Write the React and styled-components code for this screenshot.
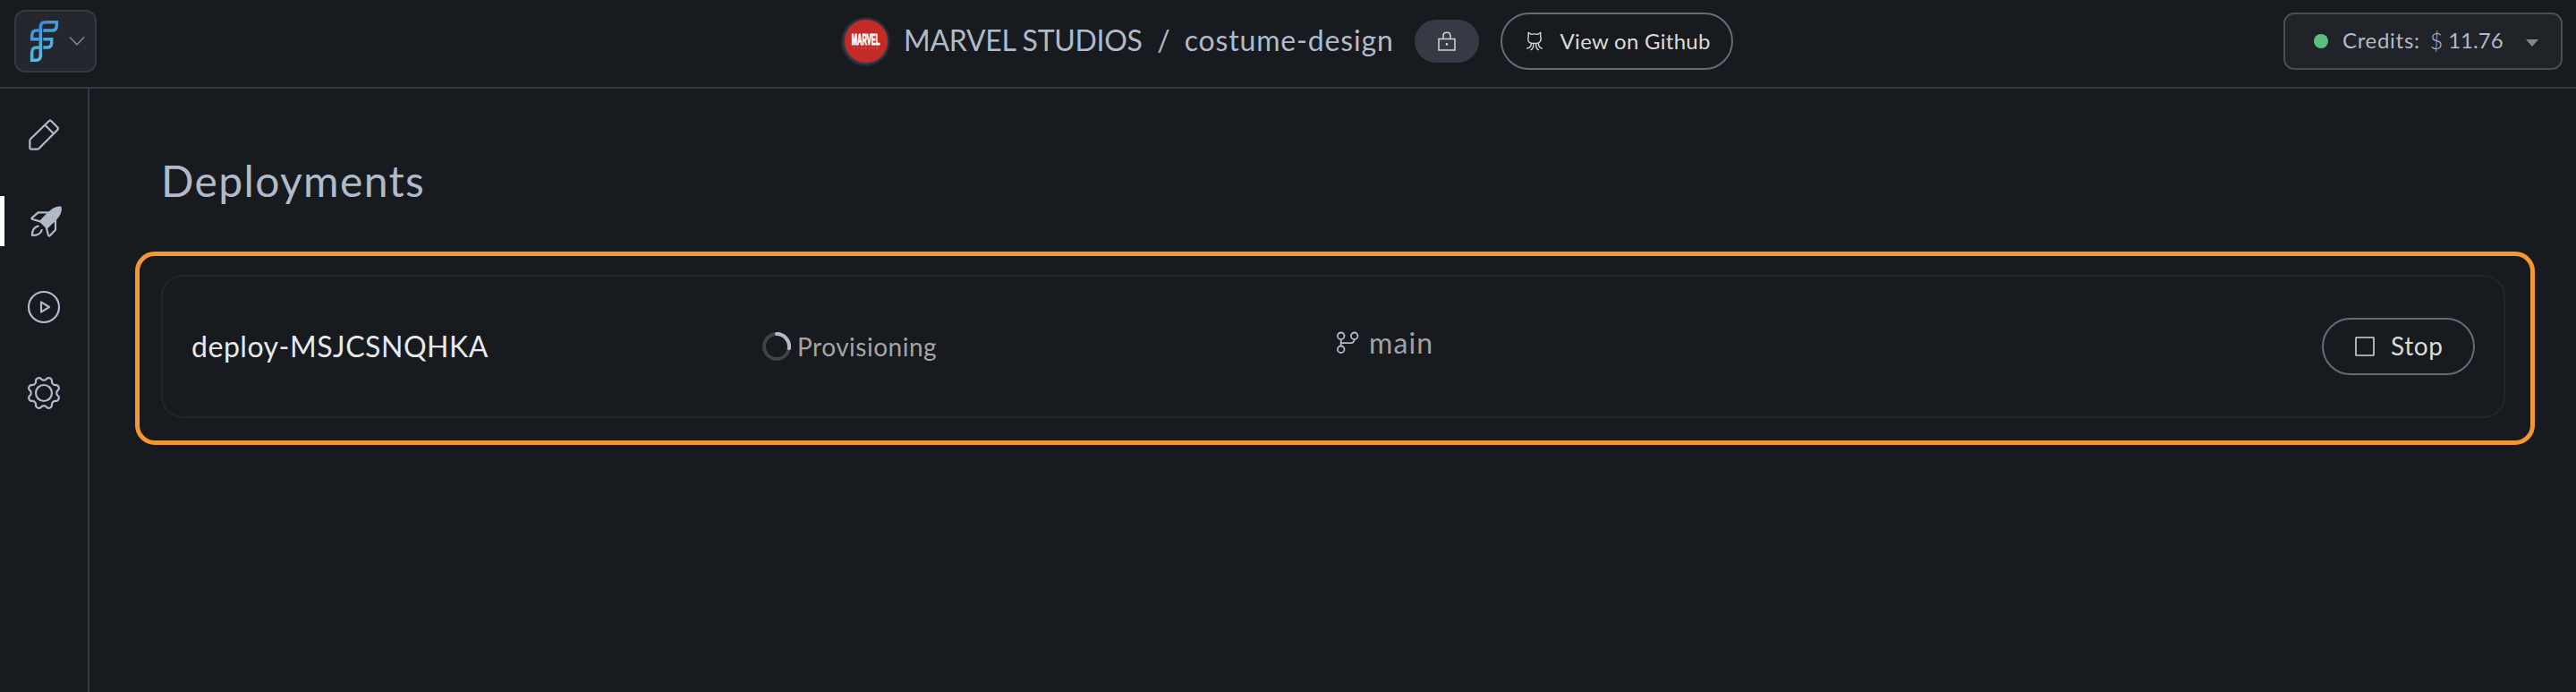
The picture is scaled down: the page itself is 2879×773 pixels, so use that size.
import React from 'react';
import styled, { createGlobalStyle } from 'styled-components';

const GlobalStyle = createGlobalStyle`
  *, *::before, *::after { box-sizing: border-box; }
  body {
    margin: 0;
    background: #171a1f;
    color: #b0bac9;
    font-family: Lato, "Open Sans", sans-serif;
  }
  svg { display: block; flex: none; }
  button { font: inherit; color: inherit; margin: 0; }
`;

const Page = styled.div`
  display: flex;
  flex-direction: column;
  height: 100vh;
  overflow: hidden;
`;

const Header = styled.header`
  display: flex;
  align-items: flex-start;
  height: 99px;
  padding: 11px 15px 0 16px;
  border-bottom: 2px solid #343b45;
`;

const LogoButton = styled.button`
  display: flex;
  align-items: center;
  gap: 10px;
  width: 92px;
  height: 70px;
  padding: 0 11px 0 15px;
  border: 2px solid #37393f;
  border-radius: 12px;
  background: #24272e;
`;

const Breadcrumb = styled.div`
  display: flex;
  align-items: center;
  height: 70px;
  margin-left: 832px;
`;

const Avatar = styled.div`
  display: flex;
  align-items: center;
  justify-content: center;
  width: 55px;
  height: 55px;
  margin-right: 15px;
  border: 2px solid #262b33;
  border-radius: 50%;
  background: #343b4b;
`;

const Crumb = styled.span`
  margin-bottom: 3px;
  margin-right: ${(p) => p.$gap}px;
  font-size: 32px;
  line-height: 40px;
  letter-spacing: ${(p) => p.$spacing || 0}px;
  white-space: nowrap;
`;

const LockBadge = styled.span`
  display: flex;
  align-items: center;
  justify-content: center;
  width: 72px;
  height: 48px;
  margin-right: 24px;
  border-radius: 24px;
  background: #353a44;
`;

const PillButton = styled.button`
  display: flex;
  align-items: center;
  width: ${(p) => p.$width}px;
  height: 64px;
  padding: 0 0 0 ${(p) => p.$inset}px;
  border: 2px solid #666b77;
  border-radius: 32px;
  background: transparent;
  color: #d9dadc;
`;

const PillLabel = styled.span`
  margin-left: ${(p) => p.$gap}px;
  margin-bottom: ${(p) => p.$lift || 0}px;
  font-size: ${(p) => p.$size}px;
  line-height: 34px;
  letter-spacing: ${(p) => p.$spacing}px;
  white-space: nowrap;
`;

const Credits = styled.button`
  display: flex;
  align-items: center;
  width: 312px;
  height: 64px;
  margin: 3px 0 0 auto;
  padding: 0 25px 0 32px;
  border: 2px solid #4a4d52;
  border-radius: 12px;
  background: #202327;
`;

const StatusDot = styled.span`
  width: 16px;
  height: 16px;
  margin-right: 16px;
  border-radius: 50%;
  background: #5bbf80;
`;

const CreditsLabel = styled.span`
  margin: 0 11px 2px 0;
  font-size: 24px;
  line-height: 30px;
  letter-spacing: 0.7px;
`;

const Currency = styled.span`
  margin: 0 6px 2px 0;
  font-size: 25px;
  font-weight: 300;
  line-height: 30px;
`;

const Amount = styled.span`
  margin: 0 auto 2px 0;
  font-size: 24px;
  line-height: 30px;
`;

const Caret = styled.span`
  width: 0;
  height: 0;
  margin-top: 4px;
  border: 7.5px solid transparent;
  border-top: 8.5px solid #7f8793;
  border-bottom: 0;
`;

const Body = styled.div`
  display: flex;
  flex: 1;
  min-height: 0;
`;

const Sidebar = styled.nav`
  display: flex;
  flex-direction: column;
  gap: 40px;
  width: 100px;
  padding-top: 24px;
  border-right: 2px solid #343b45;
`;

const NavItem = styled.a`
  display: flex;
  align-items: center;
  height: 56px;
  padding-left: ${(p) => (p.$active ? 27 : 29)}px;
  border-left: ${(p) => (p.$active ? '5px solid #fff' : '0')};
`;

const Main = styled.main`
  flex: 1;
  padding: 74px 46px 0 51px;
`;

const Title = styled.h1`
  margin: 0 0 50px 29px;
  font-size: 48px;
  font-weight: 400;
  line-height: 58px;
  letter-spacing: 1.36px;
`;

const Highlight = styled.section`
  height: 216px;
  padding: 21px 28px 0 24px;
  border: 5px solid #f39733;
  border-radius: 22px;
`;

const DeploymentCard = styled.article`
  display: grid;
  grid-template-columns: repeat(4, 1fr);
  align-items: center;
  height: 160px;
  padding: 0 32px;
  border: 2px solid #22252a;
  border-radius: 24px;
`;

const DeploymentName = styled.div`
  margin-bottom: 1px;
  font-size: 32px;
  line-height: 40px;
  letter-spacing: 0.53px;
  color: #e9e9ea;
`;

const Status = styled.div`
  display: flex;
  align-items: center;
  gap: 7px;
  color: #a4a5a8;
  font-size: 28px;
  line-height: 34px;
  letter-spacing: 0.5px;
`;

const Branch = styled.div`
  display: flex;
  align-items: center;
  gap: 11px;
  margin: 0 0 9px 3px;
  color: #a1a2a5;
  font-size: 32px;
  line-height: 40px;
  letter-spacing: 1.1px;
`;

const Actions = styled.div`
  display: flex;
  justify-content: flex-end;
`;

const Logo = () => (
  <svg width="34" height="48" viewBox="99 66 102 144" fill="none" stroke="url(#brand)" strokeWidth="10.5">
    <defs>
      <linearGradient id="brand" gradientUnits="userSpaceOnUse" x1="112" y1="80" x2="172" y2="200">
        <stop offset="0" stopColor="#4188d8" />
        <stop offset="1" stopColor="#5ac6de" />
      </linearGradient>
    </defs>
    <path d="M145 102H174Q190 102 190 86V74H152Q136 74 136 90V185Q136 202 119 202H107V176Q107 159 123 159H131" />
    <path d="M131 102H124Q107 102 107 119V131H131" />
    <path d="M145 131H173V143Q173 159 157 159H145" />
  </svg>
);

const ChevronIcon = () => (
  <svg width="18" height="12" viewBox="0 0 18 12" fill="none" stroke="#7d838d" strokeWidth="1.7">
    <path d="M1 1.5L9 9.8L17 1.5" />
  </svg>
);

const MarvelMark = () => (
  <svg width="48" height="48" viewBox="0 0 48 48">
    <circle cx="24" cy="24" r="24" fill="#c42a28" />
    <g fill="#fff" fontFamily="Liberation Sans, sans-serif" textAnchor="middle">
      <text transform="translate(23.6 28.4) scale(.455 1)" stroke="#fff" strokeWidth="1" fontWeight="700" fontSize="16.5">MARVEL</text>
      <text x="24.6" y="32.6" fill="#dc8583" fontSize="2.6" letterSpacing="2.6">STUDIOS</text>
    </g>
  </svg>
);

const LockIcon = () => (
  <svg width="20" height="22" viewBox="0 0 20 22" fill="none" stroke="#d3d4d7" strokeWidth="1.5">
    <path d="M1 8.4H19V21H1ZM6 8.4V5Q6 1.3 10 1.3Q14 1.3 14 5V8.4" />
    <circle cx="10" cy="14.4" r="1.3" fill="#d3d4d7" stroke="none" />
  </svg>
);

const OctocatIcon = () => (
  <svg width="19.3" height="22" viewBox="855 108 54 66" preserveAspectRatio="none" fill="none" stroke="#d5d5d7" strokeWidth="3.9" strokeLinecap="round" strokeLinejoin="round">
    <path d="M864 112L872 118Q883 115 894 118L902 112V125Q905 136 900 143Q897 148 890 148H876Q869 148 865 143Q861 136 864 125Z" />
    <path d="M873 149Q872 163 860 165M880 149Q880 166 872 170M888 149Q887 166 895 170M895 149Q896 163 906 165" />
  </svg>
);

const PencilIcon = () => (
  <svg width="40" height="40" viewBox="87 63 120 120" fill="none" stroke="#b0bac9" strokeWidth="6.6" strokeLinejoin="round">
    <path d="M164 76Q168 72 172 76L193 97Q197 101 193 105L131 167Q128 170 124 170H104Q100 170 100 166V142Q100 138 103 135ZM152 90L181 119" />
  </svg>
);

const RocketIcon = () => (
  <svg width="40" height="40" viewBox="96 350 120 120" fill="none" stroke="#b0bac9" strokeWidth="6.6" strokeLinejoin="round" strokeLinecap="round">
    <path d="M206 361Q211 382 189 406L157 437L131 411L160 381Q185 356 206 361Z" fill="#b0bac9" stroke="none" />
    <path d="M160 381H128L107 399Q105 403 110 404L134 411M186 408V439L168 458Q164 462 162 457L156 434" />
    <path d="M128 427Q107 432 108 458Q135 458 140 440" />
  </svg>
);

const PlayIcon = () => (
  <svg width="40" height="40" viewBox="0 0 40 40" fill="none" stroke="#b0bac9" strokeWidth="2.2">
    <circle cx="20" cy="20" r="17" />
    <path d="M17 14.4V25.6L26 20Z" strokeLinejoin="round" />
  </svg>
);

// Eight rounded teeth traced as a wave around a circle.
const gearPath = Array.from({ length: 144 }, (_, i) => {
  const a = (i / 144) * Math.PI * 2;
  const wave = -Math.cos(8 * a);
  const r = 16.1 + 1.75 * Math.tanh(1.5 * wave) / Math.tanh(1.5);
  return `${i ? 'L' : 'M'}${(20 + r * Math.cos(a)).toFixed(2)} ${(20 + r * Math.sin(a)).toFixed(2)}`;
}).join('') + 'Z';

const GearIcon = () => (
  <svg width="40" height="40" viewBox="0 0 40 40" fill="none" stroke="#b0bac9" strokeWidth="2.2" strokeLinejoin="round">
    <path d={gearPath} />
    <circle cx="20" cy="20" r="9" />
  </svg>
);

const Spinner = () => (
  <svg width="32" height="32" viewBox="0 0 32 32" fill="none" strokeWidth="4">
    <circle cx="16" cy="16" r="14" stroke="#3f4246" />
    <path d="M16 2A14 14 0 0 1 29.9 18" stroke="#b3bccd" strokeLinecap="round" />
  </svg>
);

const BranchIcon = () => (
  <svg width="26" height="26" viewBox="0 0 26 26" fill="none" stroke="#b0bac9" strokeWidth="1.8">
    <circle cx="5.7" cy="5.3" r="3.8" />
    <circle cx="20.7" cy="5.3" r="3.8" />
    <circle cx="5.7" cy="20.3" r="3.8" />
    <path d="M5.7 9.1V16.5M5.7 13.1H17.4Q20 13 20.7 9.1" />
  </svg>
);

const StopIcon = () => (
  <svg width="22" height="22" viewBox="0 0 22 22" fill="none" stroke="#d3d4d7" strokeWidth="1.6">
    <rect x="1" y="1" width="20" height="20" rx="0.6" />
  </svg>
);

const navItems = [
  { name: 'edit', Icon: PencilIcon },
  { name: 'deployments', Icon: RocketIcon, active: true },
  { name: 'run', Icon: PlayIcon },
  { name: 'settings', Icon: GearIcon },
];

export default function App() {
  return (
    <Page>
      <GlobalStyle />
      <Header>
        <LogoButton>
          <Logo />
          <ChevronIcon />
        </LogoButton>
        <Breadcrumb>
          <Avatar><MarvelMark /></Avatar>
          <Crumb $gap={16.5} $spacing={-0.29}>MARVEL STUDIOS</Crumb>
          <Crumb $gap={16}>/</Crumb>
          <Crumb $gap={23.5} $spacing={0.85}>costume-design</Crumb>
          <LockBadge><LockIcon /></LockBadge>
          <PillButton $width={260} $inset={26}>
            <OctocatIcon />
            <PillLabel $gap={19} $size={24} $spacing={0.28}>View on Github</PillLabel>
          </PillButton>
        </Breadcrumb>
        <Credits>
          <StatusDot />
          <CreditsLabel>Credits:</CreditsLabel>
          <Currency>$</Currency>
          <Amount>11.76</Amount>
          <Caret />
        </Credits>
      </Header>
      <Body>
        <Sidebar>
          {navItems.map(({ name, Icon, active }) => (
            <NavItem key={name} $active={active}><Icon /></NavItem>
          ))}
        </Sidebar>
        <Main>
          <Title>Deployments</Title>
          <Highlight>
            <DeploymentCard>
              <DeploymentName>deploy-MSJCSNQHKA</DeploymentName>
              <Status><Spinner />Provisioning</Status>
              <Branch><BranchIcon />main</Branch>
              <Actions>
                <PillButton $width={171} $inset={35}>
                  <StopIcon />
                  <PillLabel $gap={18} $size={28} $spacing={0.6} $lift={2}>Stop</PillLabel>
                </PillButton>
              </Actions>
            </DeploymentCard>
          </Highlight>
        </Main>
      </Body>
    </Page>
  );
}
